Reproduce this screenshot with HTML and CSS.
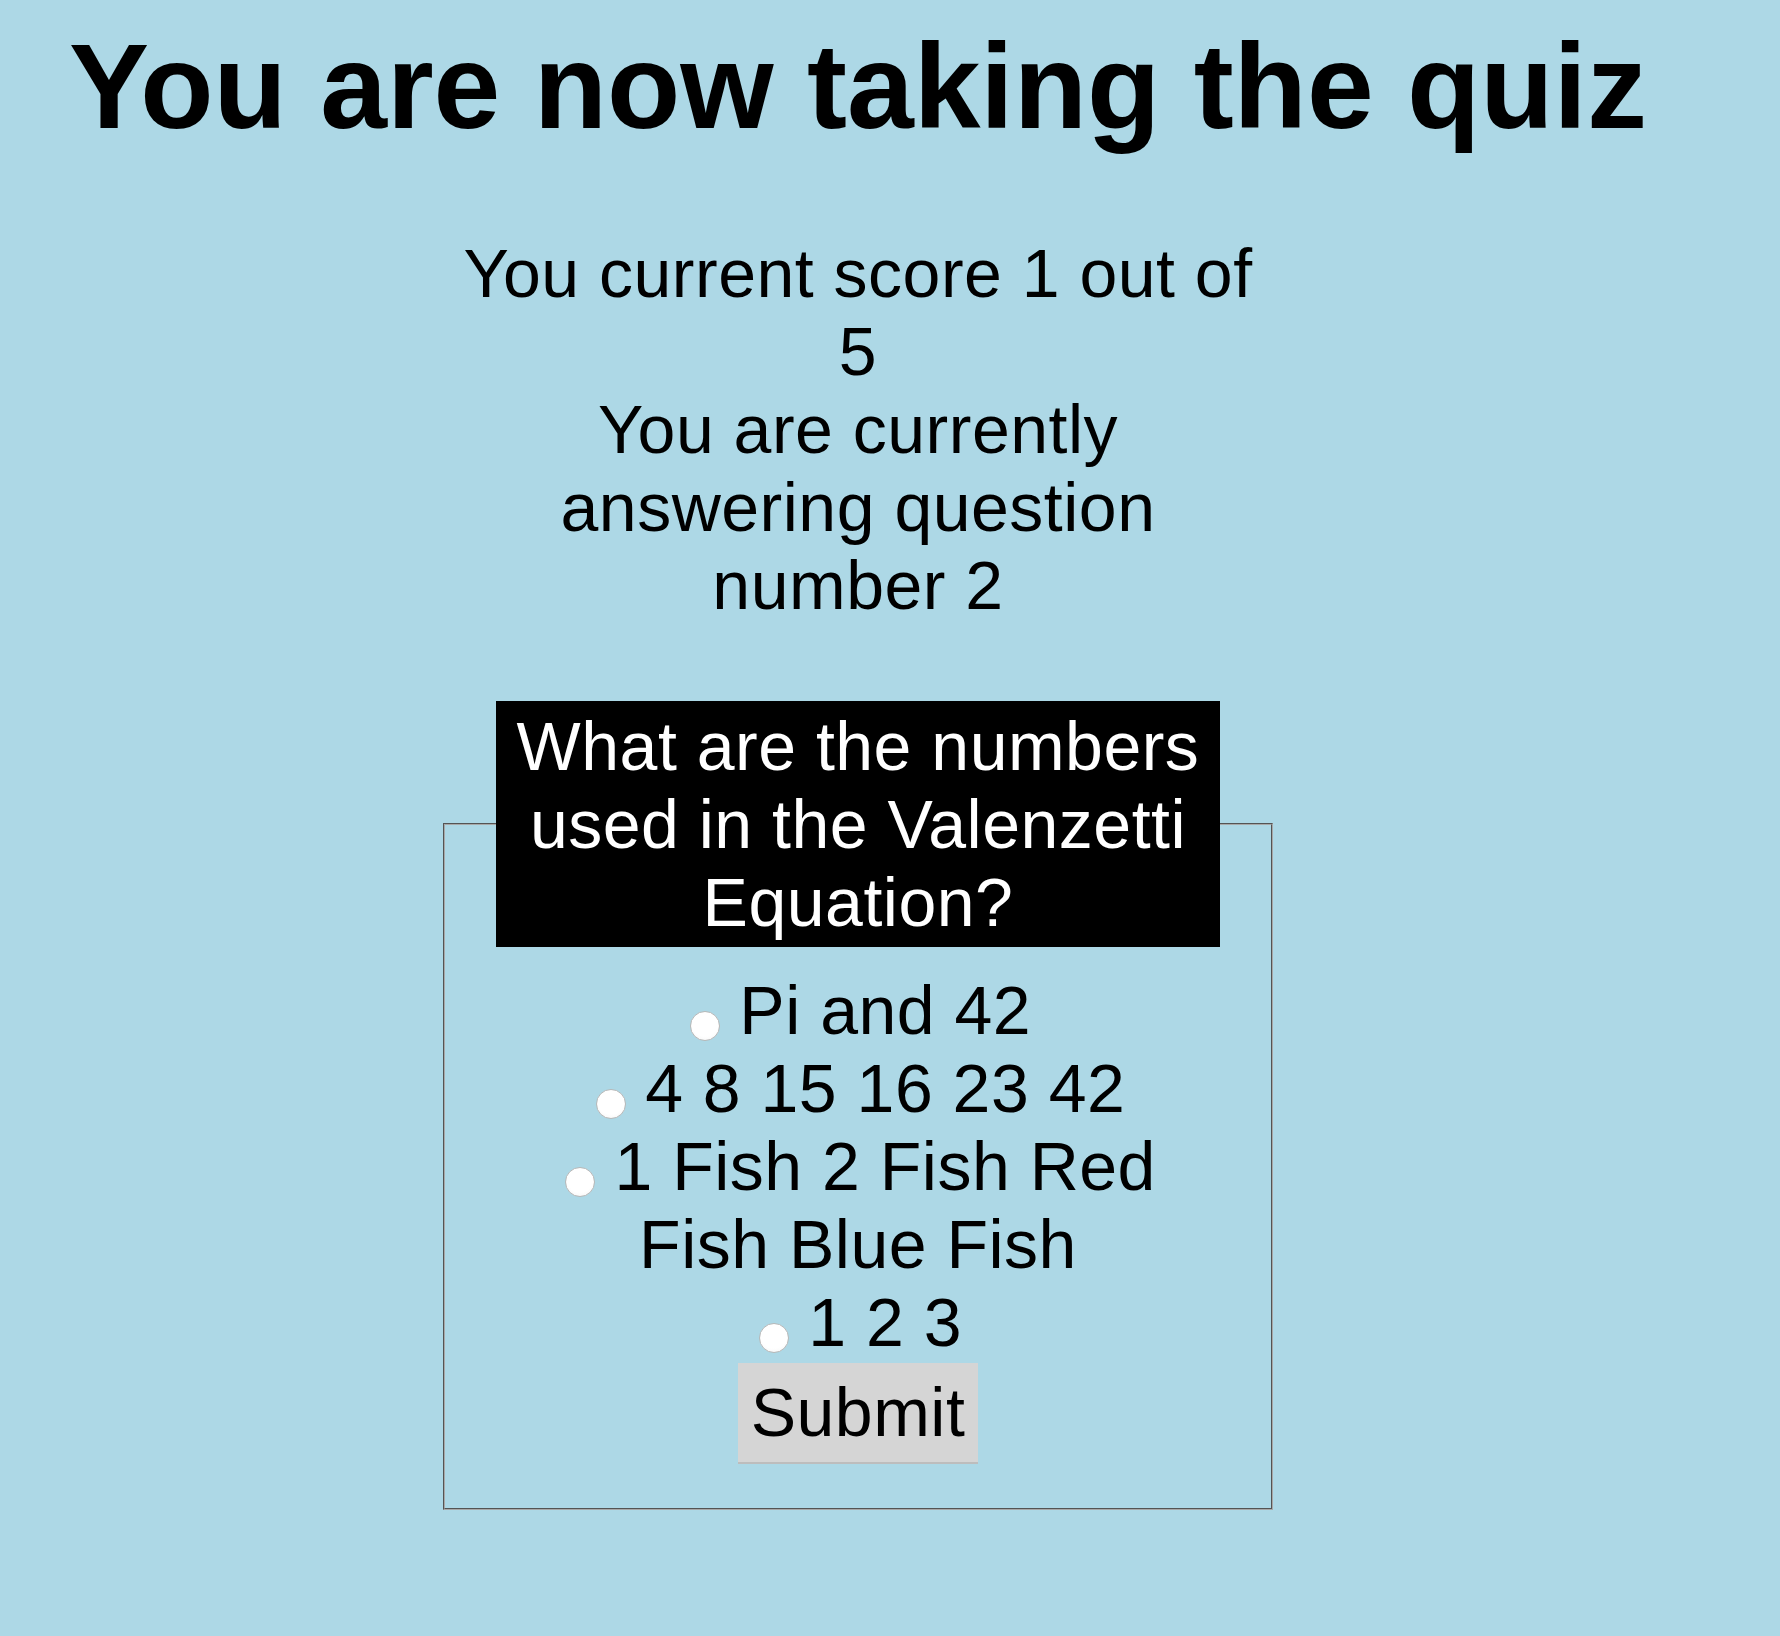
FILE: index.html
```html
<!DOCTYPE html>
<html>
<head>
<meta charset="utf-8">
<title>Quiz</title>
<link rel="stylesheet" href="styles.css">
</head>
<body>
<div class="page">
  <h1 class="title">You are now taking the quiz</h1>
  <div class="status">
    <div>You current score 1 out of 5</div>
    <div>You are currently answering question number 2</div>
  </div>
  <form class="quiz">
    <fieldset class="question">
      <legend class="question-text">What are the numbers used in the Valenzetti Equation?</legend>
      <div class="option"><input type="radio" name="answer" id="a1" class="radio"> <label for="a1">Pi and 42</label></div>
      <div class="option"><input type="radio" name="answer" id="a2" class="radio"> <label for="a2">4 8 15 16 23 42</label></div>
      <div class="option"><input type="radio" name="answer" id="a3" class="radio"> <label for="a3">1 Fish 2 Fish Red Fish Blue Fish</label></div>
      <div class="option"><input type="radio" name="answer" id="a4" class="radio"> <label for="a4">1 2 3</label></div>
      <button type="button" class="submit">Submit</button>
    </fieldset>
  </form>
</div>
</body>
</html>
```

FILE: styles.css
```css
html, body {
  margin: 0;
  padding: 0;
  background: #add8e6;
}

body {
  font-family: "Liberation Sans", Arial, sans-serif;
  color: #000;
}

.page {
  width: 1700px;
  padding: 17px 8px 40px;
  text-align: center;
}

.title {
  margin: 0;
  font-size: 120px;
  font-weight: bold;
  line-height: normal;
}

.status {
  width: 810px;
  margin: 79px auto 0;
  font-size: 68px;
  line-height: 78px;
  letter-spacing: 0.5px;
}

.quiz {
  margin: 0;
}

.question {
  box-sizing: border-box;
  width: 830px;
  margin: 77px auto 0;
  font-size: 68px;
  line-height: 78px;
  letter-spacing: 0.5px;
  padding: 0.35em 0.75em 44px;
  border: 2px groove #a8a8a8;
  min-inline-size: 0;
}

.question-text {
  margin: 0 auto;
  padding: 6px 18px;
  background: #000;
  color: #fff;
  text-align: center;
}

.option {
  line-height: 78px;
}

.radio {
  -webkit-appearance: none;
  appearance: none;
  box-sizing: border-box;
  width: 30px;
  height: 30px;
  margin: 0 0 0 5px;
  border-radius: 50%;
  border: 1px solid #b8b8b8;
  background: radial-gradient(circle at 50% 40%, #ffffff 60%, #f2f2f2 100%);
  vertical-align: -7px;
}

.submit {
  display: block;
  margin: 2px auto 0;
  box-sizing: border-box;
  width: 240px;
  height: 101px;
  padding: 0 12px;
  font-family: "Liberation Sans", Arial, sans-serif;
  font-size: 68px;
  line-height: 78px;
  letter-spacing: 0.5px;
  color: #000;
  background: #d5d5d5;
  border: none;
  border-bottom: 2px solid #bdbdbd;
  border-radius: 0;
}
```
